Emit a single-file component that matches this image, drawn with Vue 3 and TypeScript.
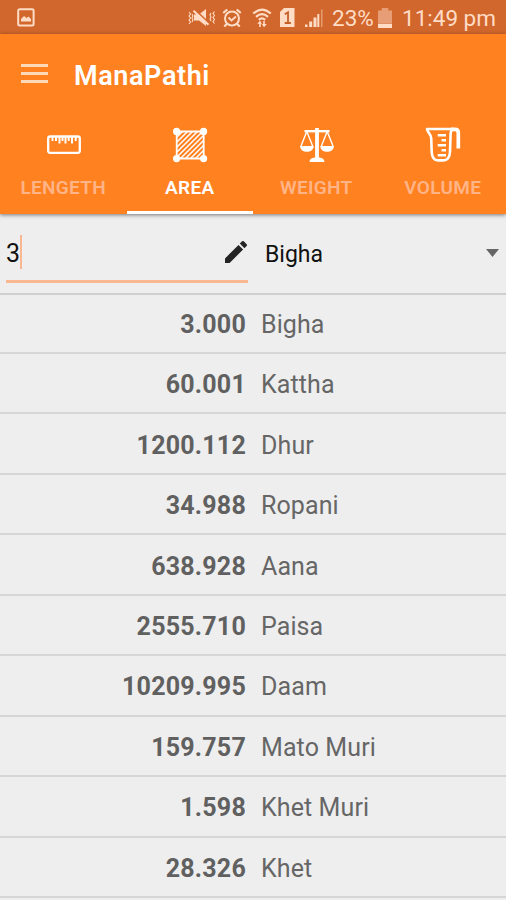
<script setup lang="ts">
import { ref } from 'vue'

interface Conversion {
  value: string
  unit: string
}

const tabs = ['LENGETH', 'AREA', 'WEIGHT', 'VOLUME']
const active = ref('AREA')
const amount = ref('3')
const unit = ref('Bigha')

const conversions: Conversion[] = [
  { value: '3.000', unit: 'Bigha' },
  { value: '60.001', unit: 'Kattha' },
  { value: '1200.112', unit: 'Dhur' },
  { value: '34.988', unit: 'Ropani' },
  { value: '638.928', unit: 'Aana' },
  { value: '2555.710', unit: 'Paisa' },
  { value: '10209.995', unit: 'Daam' },
  { value: '159.757', unit: 'Mato Muri' },
  { value: '1.598', unit: 'Khet Muri' },
  { value: '28.326', unit: 'Khet' },
]
</script>

<template>
  <div class="screen">
    <div class="status">
      <svg class="picture" width="18" height="19" viewBox="0 0 18 19">
        <rect x="1.2" y="1.2" width="15.4" height="16.4" rx="1.5" fill="none" stroke="currentColor" stroke-width="2" />
        <path d="M4 13.5V11l3-3 2.5 2 2-1.5L14 11v2.5z" fill="currentColor" />
      </svg>
      <svg class="mute" width="28" height="18" viewBox="0 0 28 18">
        <path d="M6 5.5h5L18 0v17l-7-5.5H6z" fill="currentColor" />
        <path d="M6.5 .3L21.5 14.3" stroke="#d1672c" stroke-width="1.6" />
        <path d="M5.5 1.7L20.5 15.7" stroke="currentColor" stroke-width="2" />
        <path d="M1 3l1.6 2L1 7l1.6 2L1 11l1.6 2L1 15M4 5l1 2-1 2 1 2-1 2M23 4l-1 2 1 2-1 2 1 2M26.5 2.5L25 4.5l1.5 2-1.5 2 1.5 2-1.5 2 1.5 2" fill="none" stroke="currentColor" stroke-width="1.1" />
      </svg>
      <svg class="alarm" width="20" height="20" viewBox="0 0 20 20" fill="none" stroke="currentColor">
        <circle cx="10" cy="10.5" r="7" stroke-width="2" />
        <path d="M6.5 9.5l3 3 4.5-4" stroke-width="1.8" />
        <path d="M1.2 5L5.3 1.5M14.7 1.5L18.8 5M4.8 16l-2.5 2.5M15.2 16l2.5 2.5" stroke-width="2.2" />
      </svg>
      <svg class="wifi" width="20" height="20" viewBox="0 0 20 20" fill="none" stroke="currentColor">
        <path d="M1.2 5.5Q10-2.3 18.8 5.5M4 8.8q6-5.2 12 0M6.8 11.8q3.2-2.7 6.4 0" stroke-width="2.2" />
        <path d="M8 19v-5M12 13v5" stroke-width="1.6" />
        <path d="M5.2 15.8L8 12.7l2 3zM9.8 16l2.2 3.3 2.8-3.3z" fill="currentColor" stroke="none" />
      </svg>
      <svg class="sim" width="15" height="19" viewBox="0 0 15 19">
        <path d="M4 0h10.5v19H0V4z" fill="currentColor" />
        <path d="M4.7 6.3L8 4.4v10.3M4.7 15h6.2" fill="none" stroke="#c65f28" stroke-width="1.8" />
      </svg>
      <svg class="signal" width="18" height="18" viewBox="0 0 18 18" fill="currentColor">
        <path d="M0 15.5h2.5V18H0zM4.2 12.5h3V18h-3zM8.5 8.5h3V18h-3z" />
        <path d="M12.3 5h2v13h-2z" />
        <path d="M16 .5h1.5V18H16z" opacity=".45" />
      </svg>
      <span class="percent">23%</span>
      <svg class="battery" width="14" height="20" viewBox="0 0 15 21" preserveAspectRatio="none" fill="currentColor">
        <path d="M4 0h7v2.5h4V16H0V2.5h4z" opacity=".48" />
        <path d="M0 16.5h15V21H0z" />
      </svg>
      <span class="clock">11:49 pm</span>
    </div>

    <header class="header">
      <div class="toolbar">
        <div class="menu"><i></i><i></i><i></i></div>
        <h1>ManaPathi</h1>
      </div>
      <nav class="tabs">
        <div v-for="tab in tabs" :key="tab" class="tab" :class="{ active: tab === active }" @click="active = tab">
          <svg v-if="tab === 'LENGETH'" width="36" height="36" viewBox="0 0 36 36" fill="none" stroke="#fff">
            <rect x="2.2" y="9.5" width="31.6" height="16.3" rx="2" stroke-width="2.3" />
            <path d="M6.5 10v4M10 10v4M13.5 10v6.5M16.5 10v4M19.5 10v6.5M22.7 10v4M26 10v6.5M29.7 10v4" stroke-width="2" />
          </svg>
          <svg v-else-if="tab === 'AREA'" width="36" height="36" viewBox="0 0 36 36" fill="none" stroke="#fff">
            <path d="M4.7 4.5h27v27h-27z" stroke-width="1.8" />
            <path d="M5 10l5.5-5.5M5 15L15.5 4.5M5 20L20.5 4.5M5 25L25.5 4.5M5 30L30.5 4.5M8.5 31.5L31.5 8.5M13.5 31.5l18-18M18.5 31.5l13-13M23.5 31.5l8-8" stroke-width="1.5" />
            <g fill="#fff" stroke="none"><circle cx="4.6" cy="4.4" r="3.6" /><circle cx="31.6" cy="4.4" r="3.6" /><circle cx="4.6" cy="31.6" r="3.6" /><circle cx="31.6" cy="31.6" r="3.6" /></g>
          </svg>
          <svg v-else-if="tab === 'WEIGHT'" width="36" height="36" viewBox="0 0 36 36" fill="none" stroke="#fff">
            <path d="M5.5 4.2h25" stroke-width="2.4" />
            <path d="M18 1v30" stroke-width="3.8" />
            <path d="M7.8 4.5L2 19M7.8 4.5L13.6 19M28.2 4.5L22.4 19M28.2 4.5L34 19" stroke-width="1.4" />
            <path d="M1 19h13.8c-.3 7.8-13.5 7.8-13.8 0zM21.2 19H35c-.3 7.8-13.5 7.8-13.8 0zM10.5 35c.2-3.1 2.5-4.2 5-4.5h5c2.5.3 4.8 1.4 5 4.5z" fill="#fff" stroke="none" />
          </svg>
          <svg v-else width="36" height="36" viewBox="0 0 36 36" fill="none" stroke="#fff">
            <path d="M2 2h26c-2 1.2-2.3 2.5-2.4 5L25 25c-.4 6-2.2 8.4-6.5 8.4h-5.5c-4.2 0-6-2.4-6.3-8.4L6.2 11C6 7 3 6.5 2 2z" stroke-width="2.6" stroke-linejoin="round" />
            <path d="M26 2.4h4c2.3 0 3.3 1.2 3.3 3.5V21.5" stroke-width="3.7" />
            <path d="M12.7 8.3h8.3M16.5 13.3H21M12.7 18.3H21M16.5 23.3H21M12.7 28.3h8.3" stroke-width="2.6" />
          </svg>
          <span>{{ tab }}</span>
        </div>
      </nav>
    </header>

    <section class="entry">
      <div class="field">
        <span class="amount">{{ amount }}</span><i class="caret"></i>
        <svg class="pencil" width="22" height="22" viewBox="3 3 18 18">
          <path d="M3 17.25V21h3.75L17.81 9.94l-3.75-3.75zM20.71 7.04a1 1 0 0 0 0-1.41l-2.34-2.34a1 1 0 0 0-1.41 0l-1.83 1.83 3.75 3.75z" fill="#242424" />
        </svg>
      </div>
      <div class="spinner">
        <span>{{ unit }}</span>
        <svg width="13" height="8" viewBox="0 0 13 8"><path d="M0 0h13L6.5 8z" fill="#666" /></svg>
      </div>
    </section>

    <main class="list">
      <div v-for="row in conversions" :key="row.unit" class="row">
        <b>{{ row.value }}</b>
        <span>{{ row.unit }}</span>
      </div>
    </main>
  </div>
</template>

<style>
body {
  margin: 0;
  background: #eee;
}
</style>

<style scoped>
.screen {
  width: 506px;
  height: 900px;
  overflow: hidden;
  background: #eee;
  font-family: Roboto, sans-serif;
}
.screen svg {
  display: block;
  flex: none;
}
.status {
  box-sizing: border-box;
  height: 34px;
  padding: 1px 0 0 17px;
  display: flex;
  align-items: center;
  background: #d1672c;
  color: #ffdcc6;
  font-size: 22.5px;
  white-space: nowrap;
}
.mute { margin-left: 153px; }
.alarm { margin-left: 6px; }
.wifi { margin-left: 10px; }
.sim { margin-left: 8px; }
.signal { margin-left: 10px; }
.percent {
  width: 43px;
  margin-left: 9px;
}
.battery { margin-left: 3px; }
.clock {
  margin-left: 10px;
}
.header {
  position: relative;
  height: 180px;
  background: #ff811f;
  box-shadow: 0 1px 4px rgba(0, 0, 0, 0.5);
}
.toolbar {
  height: 82px;
  padding-left: 21px;
  display: flex;
  align-items: center;
}
.menu {
  width: 27px;
  display: grid;
  gap: 5px;
  margin-top: -4px;
}
.menu i {
  height: 3px;
  background: #ffd9b8;
}
h1 {
  margin: 2px 0 0 26px;
  color: #fff;
  font-size: 27px;
  font-weight: 600;
  line-height: 32px;
  letter-spacing: 0.6px;
}
.tabs {
  display: grid;
  grid-template-columns: repeat(4, 1fr);
  height: 98px;
}
.tab {
  box-sizing: border-box;
  padding: 11px 0 0 1px;
  display: flex;
  flex-direction: column;
  align-items: center;
  border-bottom: 3px solid transparent;
  color: #ffb488;
  font-size: 19px;
  font-weight: 600;
  line-height: 24px;
  letter-spacing: 0.3px;
}
.tab span { margin: 13px 1px 0 0; }
.tab.active {
  border-color: #fff;
  color: #fff;
}
.entry {
  box-sizing: border-box;
  height: 80.6px;
  padding: 0 7px 0 6px;
  display: flex;
  border-bottom: 2px solid #cfcfcf;
  color: #111;
}
.field {
  box-sizing: border-box;
  width: 242px;
  height: 69px;
  padding-top: 10px;
  display: flex;
  align-items: center;
  border-bottom: 3px solid #f9b892;
}
.amount {
  margin-top: 3px;
  font-size: 25px;
}
.caret {
  width: 2px;
  height: 34px;
  background: #f9b892;
}
.pencil {
  margin: 0 1px 0 auto;
}
.spinner {
  flex: 1;
  height: 80px;
  margin-left: 17px;
  display: flex;
  align-items: center;
  justify-content: space-between;
  font-size: 23px;
}
.spinner svg { margin-top: -2px; }
.list {
  margin-top: -1px;
}
.row {
  box-sizing: border-box;
  height: 60.45px;
  padding-top: 3px;
  display: grid;
  grid-template-columns: 246px 1fr;
  column-gap: 15px;
  align-items: center;
  border-bottom: 2px solid #d6d6d6;
  color: #666;
  font-size: 25px;
  letter-spacing: 0.1px;
}
.row b {
  text-align: right;
  color: #606060;
  letter-spacing: 0.22px;
}
</style>
